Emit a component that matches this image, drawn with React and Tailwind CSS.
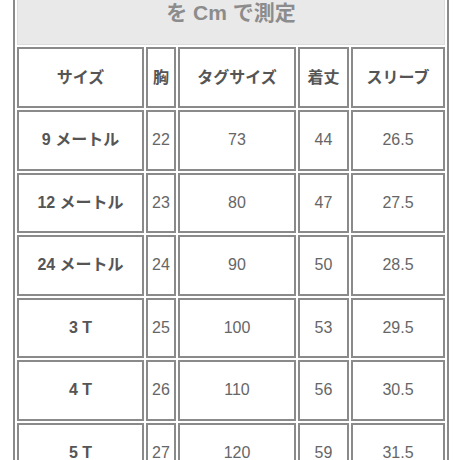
const HEAD = ['サイズ', '胸', 'タグサイズ', '着丈', 'スリーブ'];

const ROWS = [
  ['9 メートル', '22', '73', '44', '26.5'],
  ['12 メートル', '23', '80', '47', '27.5'],
  ['24 メートル', '24', '90', '50', '28.5'],
  ['3 T', '25', '100', '53', '29.5'],
  ['4 T', '26', '110', '56', '30.5'],
  ['5 T', '27', '120', '59', '31.5'],
];

const cell = 'border-2 border-[#8a8a8a] text-center align-middle p-0 whitespace-nowrap';

export default function App() {
  return (
    <div
      className="w-[460px] h-[460px] overflow-hidden bg-white"
      style={{ fontFamily: '"Liberation Sans", "Noto Sans CJK JP", sans-serif' }}
    >
      <table className="ml-[13px] mt-[-27px] w-[436px] table-fixed border-separate border-spacing-[2px] border-2 border-[#8a8a8a]">
        <colgroup>
          <col className="w-[127px]" />
          <col className="w-[30px]" />
          <col className="w-[118px]" />
          <col className="w-[51px]" />
          <col className="w-[94px]" />
        </colgroup>
        <tbody>
          <tr>
            <th
              colSpan={5}
              className="h-[68px] align-bottom pb-[17px] bg-[#e9e9e9] border border-[#dcdcdc] text-[21px] leading-[28px] font-bold text-[#8c8c8c]"
            >
              を Cm で測定
            </th>
          </tr>
          <tr>
            {HEAD.map(h => (
              <th key={h} className={`${cell} h-[61px] text-[16px] font-bold text-[#555]`}>
                {h}
              </th>
            ))}
          </tr>
          {ROWS.map(r => (
            <tr key={r[0]}>
              {r.map((v, i) => (
                <td
                  key={i}
                  className={`${cell} h-[60.5px] text-[16px] ${i === 0 ? 'font-bold text-[#555]' : 'text-[#666]'}`}
                >
                  {v}
                </td>
              ))}
            </tr>
          ))}
        </tbody>
      </table>
    </div>
  );
}
